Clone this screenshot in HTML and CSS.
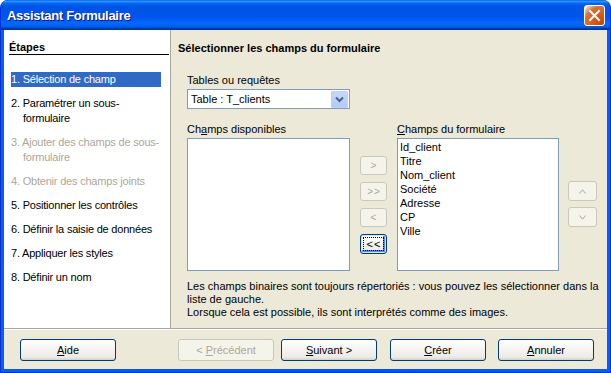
FILE: index.html
```html
<!DOCTYPE html>
<html lang="fr">
  <head>
    <meta charset="UTF-8" />
    <meta name="viewport" content="width=device-width, initial-scale=1.0" />
    <title>Assistant Formulaire</title>
    <link rel="stylesheet" href="styles.css">
  </head>
  <body>
    <div class="window">
      <div class="titlebar">
        <span class="title">Assistant Formulaire</span>
        <div class="close">
          <svg viewBox="0 0 21 21" width="21" height="21">
            <path d="M6 6 L15 15 M15 6 L6 15" stroke="#fff" stroke-width="2" stroke-linecap="square" />
          </svg>
        </div>
      </div>
      <div class="frame">
        <div class="client">
          <div class="main">
            <div class="steps">
              <div class="steps-title">Étapes</div>
              <ul class="step-list">
                <li class="step active">1. Sélection de champ</li>
                <li class="step">2. Paramétrer un sous-formulaire</li>
                <li class="step disabled">3. Ajouter des champs de sous-formulaire</li>
                <li class="step disabled">4. Obtenir des champs joints</li>
                <li class="step">5. Positionner les contrôles</li>
                <li class="step">6. Définir la saisie de données</li>
                <li class="step">7. Appliquer les styles</li>
                <li class="step">8. Définir un nom</li>
              </ul>
            </div>
            <div class="page">
              <div class="page-title">Sélectionner les champs du formulaire</div>
              <div class="form">
                <div class="label">Tables ou requêtes</div>
                <div class="combo">
                  <span>Table : T_clients</span>
                  <span class="combo-btn">
                    <svg viewBox="0 0 17 17" width="17" height="17">
                      <path d="M5 6.5 L8.5 10 L12 6.5" fill="none" stroke="#4d6185" stroke-width="2" />
                    </svg>
                  </span>
                </div>
                <div class="lists">
                  <div class="list-col">
                    <div class="label">Ch<u>a</u>mps disponibles</div>
                    <div class="listbox"></div>
                  </div>
                  <div class="move-col">
                    <div class="sbtn disabled">&gt;</div>
                    <div class="sbtn disabled">&gt;&gt;</div>
                    <div class="sbtn disabled">&lt;</div>
                    <div class="sbtn focus">&lt;&lt;</div>
                  </div>
                  <div class="list-col">
                    <div class="label"><u>C</u>hamps du formulaire</div>
                    <div class="listbox right">
                      <div class="item">Id_client</div>
                      <div class="item">Titre</div>
                      <div class="item">Nom_client</div>
                      <div class="item">Société</div>
                      <div class="item">Adresse</div>
                      <div class="item">CP</div>
                      <div class="item">Ville</div>
                    </div>
                  </div>
                  <div class="order-col">
                    <div class="obtn disabled">
                      <svg viewBox="0 0 7 5" width="7" height="5"><path d="M0.5 4.5 L3.5 0.8 L6.5 4.5" fill="none" stroke="#aca899" stroke-width="1" /></svg>
                    </div>
                    <div class="obtn disabled">
                      <svg viewBox="0 0 7 5" width="7" height="5"><path d="M0.5 0.5 L3.5 4.2 L6.5 0.5" fill="none" stroke="#aca899" stroke-width="1" /></svg>
                    </div>
                  </div>
                </div>
                <p class="notes">
                  Les champs binaires sont toujours répertoriés : vous pouvez les sélectionner dans la<br>
                  liste de gauche.<br>
                  Lorsque cela est possible, ils sont interprétés comme des images.
                </p>
              </div>
            </div>
          </div>
          <div class="footer">
            <div class="btn help"><span><u>A</u>ide</span></div>
            <div class="btn prev disabled"><span>&lt; <u>P</u>récédent</span></div>
            <div class="btn next"><span><u>S</u>uivant &gt;</span></div>
            <div class="btn create"><span><u>C</u>réer</span></div>
            <div class="btn cancel"><span><u>A</u>nnuler</span></div>
          </div>
        </div>
      </div>
    </div>
  </body>
</html>
```
FILE: styles.css
```css
* {
  margin: 0;
  padding: 0;
  box-sizing: border-box;
}
body {
  font: 11px "Liberation Sans", Tahoma, sans-serif;
  color: #000;
  background: #fff;
}

.window {
  width: 611px;
  height: 373px;
  display: flex;
  flex-direction: column;
  background: #0054e3;
  border: 1px solid #0831d9;
  border-top: 0;
  border-radius: 8px 8px 0 0;
  overflow: hidden;
}

.titlebar {
  height: 30px;
  flex: none;
  display: flex;
  align-items: center;
  justify-content: space-between;
  padding: 0 5px 0 6px;
  background: linear-gradient(
    #0058ee 0%,
    #3593ff 4%,
    #288eff 6%,
    #127dff 8%,
    #036ffc 10%,
    #0262ee 14%,
    #0057e5 20%,
    #0054e3 24%,
    #0055eb 56%,
    #005bf5 66%,
    #026afe 76%,
    #0062ef 86%,
    #0052d6 92%,
    #0040ab 94%,
    #003092 100%
  );
}

.title {
  color: #fff;
  font-weight: bold;
  font-size: 13px;
  letter-spacing: -0.3px;
  text-shadow: 1px 1px #0f1089;
  padding-top: 1px;
}

.close {
  width: 21px;
  height: 21px;
  border: 1px solid #fff;
  border-radius: 3px;
  background: radial-gradient(circle at 90% 90%, #cc4600 0%, #dc6527 55%, #cd7546 70%, #ffccb2 90%, #fff 100%);
  display: flex;
  align-items: center;
  justify-content: center;
}

.close svg {
  display: block;
  margin: -1px;
}

.frame {
  flex: 1;
  display: flex;
  padding: 0 3px 3px;
  background: linear-gradient(to right, #0a5ee8, #0055ea 40%, #0055ea 60%, #0a5ee8);
}

.client {
  flex: 1;
  display: flex;
  flex-direction: column;
  background: #ece9d8;
}

.main {
  height: 299px;
  display: flex;
  border-bottom: 1px solid #aca899;
}

.steps {
  width: 167px;
  background: #fff;
  border-right: 1px solid #aca899;
  padding-top: 10px;
}

.steps-title {
  font-weight: bold;
  line-height: 14px;
  margin: 0 1px 0 5px;
  border-bottom: 1px solid #000;
}

.step-list {
  list-style: none;
  margin: 17px 0 0 7px;
  width: 150px;
}

.step {
  line-height: 15px;
  padding-left: 12px;
  text-indent: -12px;
  margin-bottom: 9px;
  letter-spacing: -0.2px;
}

.step.active {
  background: #316ac5;
  color: #fff;
}

.step.disabled {
  color: #aca899;
}

.page {
  flex: 1;
  padding: 11px 0 0 7px;
}

.page-title {
  font-weight: bold;
  line-height: 14px;
}

.form {
  margin: 18px 0 0 9px;
}

.label {
  line-height: 14px;
  margin-bottom: 2px;
}

.combo {
  width: 163px;
  height: 20px;
  border: 1px solid #7f9db9;
  background: #fff;
  display: flex;
  align-items: center;
  justify-content: space-between;
  padding: 0 1px 0 3px;
}

.combo-btn {
  width: 17px;
  height: 17px;
  border-radius: 2px;
  background: linear-gradient(#c6d8fc, #b4c8f6);
  box-shadow: inset 0 0 0 1px #bdd0f8;
}

.combo-btn svg {
  display: block;
}

.lists {
  display: flex;
  margin-top: 13px;
}

.listbox {
  width: 163px;
  height: 133px;
  border: 1px solid #7f9db9;
  background: #fff;
}

.listbox.right {
  width: 162px;
  padding: 1px 0 0 2px;
}

.item {
  line-height: 14px;
}

.move-col {
  display: flex;
  flex-direction: column;
  gap: 7px;
  margin: 34px 10px 0 10px;
}

.sbtn {
  width: 27px;
  height: 19px;
  display: flex;
  align-items: center;
  justify-content: center;
  border: 1px solid #cac8bb;
  border-radius: 3px;
  background: #f5f4ea;
  font-size: 10px;
  letter-spacing: 1px;
  padding-left: 1px;
}

.sbtn.disabled {
  color: #aca899;
}

.sbtn.focus {
  height: 20px;
  border-color: #003c74;
  background: linear-gradient(#fff, #ecebe6 86%, #d6d0c5);
  box-shadow: inset 0 0 0 1px #cee7ff, inset -1px -1px 0 2px #6982ee;
  outline: 1px dotted #000;
  outline-offset: -4px;
  font-size: 11px;
}

.order-col {
  display: flex;
  flex-direction: column;
  gap: 6px;
  margin: 59px 0 0 9px;
}

.obtn {
  width: 29px;
  height: 20px;
  display: flex;
  align-items: center;
  justify-content: center;
  border: 1px solid #cac8bb;
  border-radius: 3px;
  background: #f5f4ea;
}

.obtn svg {
  display: block;
}

.notes {
  margin-top: 9px;
  line-height: 13px;
}

.footer {
  flex: 1;
  display: flex;
  align-items: flex-start;
  border-top: 1px solid #fff;
  padding: 9px 0 0 16px;
}

.btn {
  width: 96px;
  height: 22px;
  display: flex;
  align-items: center;
  justify-content: center;
  border: 1px solid #003c74;
  border-radius: 3px;
  background: linear-gradient(#fff, #ecebe6 86%, #d6d0c5);
}

.btn.disabled {
  border-color: #c9c7ba;
  background: #f5f4ea;
  color: #aca899;
}

.prev {
  margin-left: 62px;
}

.next {
  margin-left: 7px;
}

.create {
  margin-left: 13px;
}

.cancel {
  margin-left: 12px;
}
```
